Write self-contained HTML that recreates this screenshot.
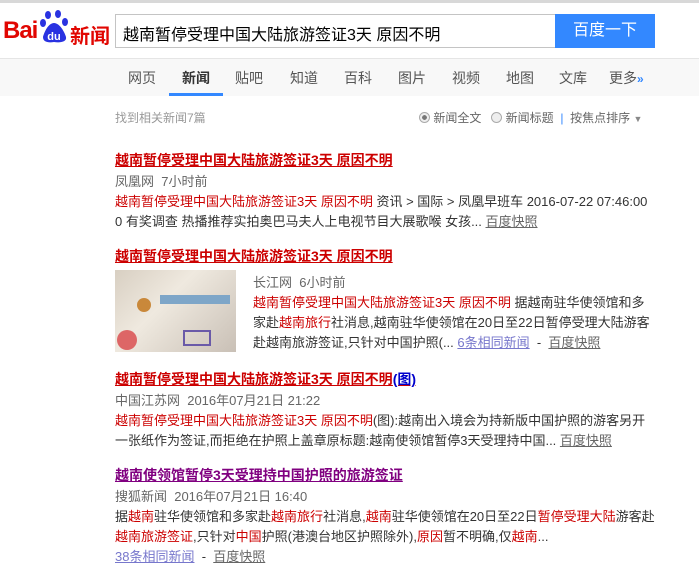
<!DOCTYPE html><html><head><meta charset="utf-8"><style>
*{margin:0;padding:0;box-sizing:border-box}
body{width:699px;height:567px;overflow:hidden;background:#fff;font-family:"Liberation Sans","Noto Sans CJK SC",sans-serif;font-size:13px;color:#333;position:relative}
.a{position:absolute;white-space:nowrap}
.r{color:#c00}
.t{color:#c00;font-weight:bold;font-size:14px;text-decoration:underline}
.g{color:#666}
.u{color:#666;text-decoration:underline}
.b{color:#77c;text-decoration:underline}
.nav span{position:absolute;top:68px;font-size:14px;color:#555}
</style></head><body>
<div class="a" style="left:0;top:0;width:699px;height:3px;background:#d8d8d8"></div>
<div class="a" style="left:3px;top:17px;font:bold 24px 'Liberation Sans',sans-serif;color:#e10601;letter-spacing:-1px">Bai</div>
<svg class="a" style="left:40px;top:9px" width="30" height="36" viewBox="0 0 30 36">
<ellipse cx="8" cy="6" rx="3" ry="4" fill="#2932e1"/><ellipse cx="18" cy="5" rx="3" ry="4" fill="#2932e1"/><ellipse cx="3" cy="14" rx="3" ry="4" fill="#2932e1"/><ellipse cx="25" cy="13" rx="3" ry="4" fill="#2932e1"/>
<path d="M14 14 C8 14 4 24 3 28 C3 33 8 34 14 33 C20 34 27 33 26 28 C25 24 20 14 14 14Z" fill="#2932e1"/>
<text x="14" y="31" font-size="11" fill="#fff" text-anchor="middle" font-family="Liberation Sans" font-weight="bold">du</text></svg>
<div class="a" style="left:70px;top:20px;font-size:20px;color:#e10601;font-weight:bold">新闻</div>
<div class="a" style="left:115px;top:14px;width:441px;height:34px;border:1px solid #c4c4c4;padding:6px 7px;font-size:16px;color:#000">越南暂停受理中国大陆旅游签证3天 原因不明</div>
<div class="a" style="left:555px;top:14px;width:100px;height:34px;background:#3388ff;color:#fff;font-size:16px;text-align:center;line-height:34px">百度一下</div>
<div class="a" style="left:0;top:58px;width:699px;height:38px;background:#f8f8f8;border-top:1px solid #e5e5e5"></div>
<div class="nav">
<span style="left:128px">网页</span><span style="left:182px;color:#333;font-weight:bold">新闻</span><span style="left:235px">贴吧</span><span style="left:290px">知道</span><span style="left:344px">百科</span><span style="left:398px">图片</span><span style="left:452px">视频</span><span style="left:506px">地图</span><span style="left:559px">文库</span><span style="left:609px">更多<b style="color:#38f;font-size:12px">»</b></span>
</div>
<div class="a" style="left:169px;top:93px;width:54px;height:3px;background:#38f"></div>
<div class="a g" style="left:115px;top:109px;font-size:12px;color:#999">找到相关新闻7篇</div>
<div class="a" style="left:419px;top:109px;font-size:12px;color:#666"><span style="display:inline-block;width:11px;height:11px;border:1px solid #aaa;border-radius:50%;background:radial-gradient(#777 35%,#eee 40%);vertical-align:-1px"></span> 新闻全文 &nbsp; <span style="display:inline-block;width:11px;height:11px;border:1px solid #aaa;border-radius:50%;background:#eee;vertical-align:-1px"></span> 新闻标题 &nbsp;<span style="color:#38f">|</span>&nbsp; 按焦点排序 <span style="font-size:9px;color:#888">▼</span></div>

<div class="a t" style="left:115px;top:150px">越南暂停受理中国大陆旅游签证3天 原因不明</div>
<div class="a g" style="left:115px;top:171px">凤凰网 &nbsp;7小时前</div>
<div class="a" style="left:115px;top:191px"><span class="r">越南暂停受理中国大陆旅游签证3天 原因不明</span> 资讯 &gt; 国际 &gt; 凤凰早班车 2016-07-22 07:46:00</div>
<div class="a" style="left:115px;top:211px">0 有奖调查 热播推荐实拍奥巴马夫人上电视节目大展歌喉 女孩... <span class="u">百度快照</span></div>

<div class="a t" style="left:115px;top:246px">越南暂停受理中国大陆旅游签证3天 原因不明</div>
<div class="a" style="left:115px;top:270px;width:121px;height:82px;background:linear-gradient(135deg,#d8cfc2,#efe9df 40%,#c9c0b6);overflow:hidden">
<div style="position:absolute;left:45px;top:25px;width:70px;height:9px;background:#7ea6c8"></div>
<div style="position:absolute;left:22px;top:28px;width:14px;height:14px;border-radius:50%;background:#c9883a"></div>
<div style="position:absolute;left:2px;top:60px;width:20px;height:20px;border-radius:50%;background:#d66"></div>
<div style="position:absolute;left:68px;top:60px;width:28px;height:16px;border:2px solid #6a5aa8"></div></div>
<div class="a g" style="left:253px;top:272px">长江网 &nbsp;6小时前</div>
<div class="a" style="left:253px;top:292px"><span class="r">越南暂停受理中国大陆旅游签证3天 原因不明</span> 据越南驻华使领馆和多</div>
<div class="a" style="left:253px;top:312px">家赴<span class="r">越南旅行</span>社消息,越南驻华使领馆在20日至22日暂停受理大陆游客</div>
<div class="a" style="left:253px;top:332px">赴越南旅游签证,只针对中国护照(... <span class="b">6条相同新闻</span> &nbsp;- &nbsp;<span class="u">百度快照</span></div>

<div class="a t" style="left:115px;top:369px">越南暂停受理中国大陆旅游签证3天 原因不明<span style="color:#00c">(图)</span></div>
<div class="a g" style="left:115px;top:390px">中国江苏网 &nbsp;2016年07月21日 21:22</div>
<div class="a" style="left:115px;top:410px"><span class="r">越南暂停受理中国大陆旅游签证3天 原因不明</span>(图):越南出入境会为持新版中国护照的游客另开</div>
<div class="a" style="left:115px;top:430px">一张纸作为签证,而拒绝在护照上盖章原标题:越南使领馆暂停3天受理持中国... <span class="u">百度快照</span></div>

<div class="a t" style="left:115px;top:465px;color:#800080">越南使领馆暂停3天受理持中国护照的旅游签证</div>
<div class="a g" style="left:115px;top:486px">搜狐新闻 &nbsp;2016年07月21日 16:40</div>
<div class="a" style="left:115px;top:506px">据<span class="r">越南</span>驻华使领馆和多家赴<span class="r">越南旅行</span>社消息,<span class="r">越南</span>驻华使领馆在20日至22日<span class="r">暂停受理大陆</span>游客赴</div>
<div class="a" style="left:115px;top:526px"><span class="r">越南旅游签证</span>,只针对<span class="r">中国</span>护照(港澳台地区护照除外),<span class="r">原因</span>暂不明确,仅<span class="r">越南</span>...</div>
<div class="a" style="left:115px;top:546px"><span class="b">38条相同新闻</span> &nbsp;- &nbsp;<span class="u">百度快照</span></div>
</body></html>
